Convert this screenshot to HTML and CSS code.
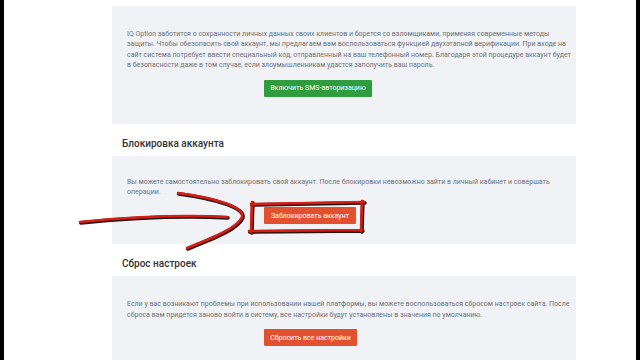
FILE: index.html
```html
<!DOCTYPE html>
<html lang="ru">
<head>
<meta charset="utf-8">
<title>Настройки безопасности</title>
<link rel="stylesheet" href="styles.css">
</head>
<body>
<div class="frame">
  <main class="page">
    <section class="panel panel--first">
      <p class="panel-text">IQ Option заботится о сохранности личных данных своих клиентов и борется со взломщиками, применяя современные методы<br>защиты. Чтобы обезопасить свой аккаунт, мы предлагаем вам воспользоваться функцией двухэтапной верификации. При входе на<br>сайт система потребует ввести специальный код, отправленный на ваш телефонный номер. Благодаря этой процедуре аккаунт будет<br>в безопасности даже в том случае, если злоумышленникам удастся заполучить ваш пароль.</p>
      <button class="btn btn--green">Включить SMS-авторизацию</button>
    </section>

    <h2 class="section-title">Блокировка аккаунта</h2>
    <section class="panel panel--lock">
      <p class="panel-text">Вы можете самостоятельно заблокировать свой аккаунт. После блокировки невозможно зайти в личный кабинет и совершать<br>операции.</p>
      <button class="btn btn--red">Заблокировать аккаунт</button>
    </section>

    <h2 class="section-title">Сброс настроек</h2>
    <section class="panel panel--reset">
      <p class="panel-text">Если у вас возникают проблемы при использовании нашей платформы, вы можете воспользоваться сбросом настроек сайта. После<br>сброса вам придется заново войти в систему, все настройки будут установлены в значения по умолчанию.</p>
      <button class="btn btn--red">Сбросить все настройки</button>
    </section>
  </main>

  <svg class="annotation" viewBox="0 0 640 360" width="640" height="360" aria-hidden="true">
    <g class="ink-shadow" transform="translate(0.8 0.9)">
      <path d="M80 222 C 120 218, 170 214, 227 217"/>
      <path d="M178 193 C 215 198, 245 207, 242 217 C 238 228, 212 238, 187 248"/>
      <path d="M251 204 L 364 202 M 362 201 L 361 231 M 249 231 L 362 230 M 252 202 L 251 232"/>
    </g>
    <g class="ink">
      <path d="M80 222 C 120 218, 170 214, 227 217"/>
      <path d="M178 193 C 215 198, 245 207, 242 217 C 238 228, 212 238, 187 248"/>
      <path d="M251 204 L 364 202 M 362 201 L 361 231 M 249 231 L 362 230 M 252 202 L 251 232"/>
    </g>
  </svg>
</div>
</body>
</html>
```

FILE: styles.css
```css
* { box-sizing: border-box; }

html, body {
  margin: 0;
  padding: 0;
  background: #000;
}

.frame {
  position: relative;
  width: 640px;
  height: 360px;
  overflow: hidden;
  padding: 0 4px;
  background: #000;
}

.page {
  height: 100%;
  background: #fff;
  padding: 6px 60px 0 108px;
  display: flex;
  flex-direction: column;
  font-family: Roboto, "Noto Sans", "Liberation Sans", sans-serif;
}

.panel {
  background: #f1f2f6;
  padding: 0 15px;
  flex-shrink: 0;
}

.panel--first { padding-top: 23px; padding-bottom: 27px; }
.panel--lock { padding-top: 21px; padding-bottom: 20px; }
.panel--reset { padding-top: 23px; flex-grow: 1; }

.panel-text {
  margin: 0;
  font-size: 7px;
  line-height: 10.4px;
  color: #6f7278;
  white-space: nowrap;
}

.btn {
  display: block;
  margin: 9px 0 0 137px;
  height: 17px;
  padding: 0;
  border: 0;
  border-radius: 1px;
  font-family: Roboto, "Noto Sans", "Liberation Sans", sans-serif;
  font-size: 7px;
  color: #fff;
  white-space: nowrap;
  text-align: center;
}

.btn--green { background: #2f9c3e; width: 108px; }
.btn--red { background: #e2512f; }

.panel--lock .btn { margin-top: 10px; width: 92px; }
.panel--reset .btn { width: 93px; }

.section-title {
  margin: 13px 0 5px 10px;
  font-size: 10px;
  line-height: 14px;
  font-weight: 500;
  color: #333;
}

.annotation {
  position: absolute;
  left: 0;
  top: 0;
  pointer-events: none;
}

.annotation path {
  fill: none;
  stroke-linecap: round;
  stroke-linejoin: round;
}

.ink-shadow path { stroke: #2a1512; stroke-width: 3.8; }
.ink path { stroke: #d81d17; stroke-width: 2.6; }
```
